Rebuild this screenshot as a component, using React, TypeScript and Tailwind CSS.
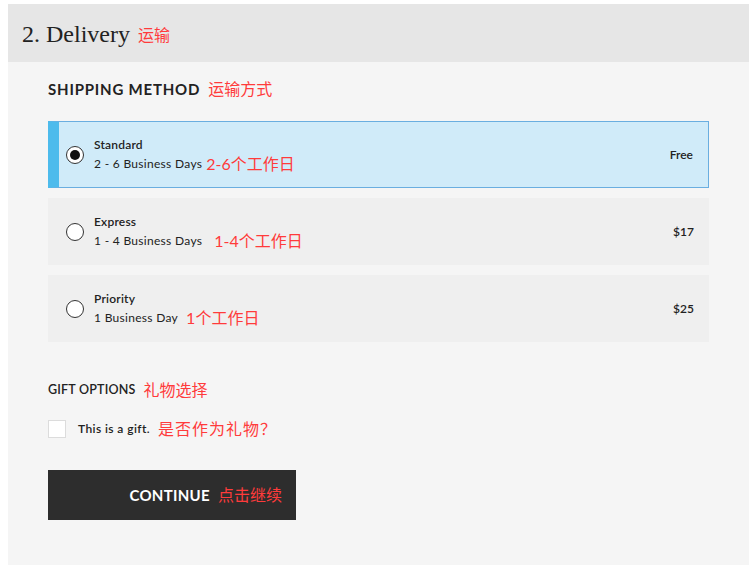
const red = 'text-[#ff3b3b]';

const options = [
  { name: 'Standard', days: '2 - 6 Business Days', cn: '2-6个工作日', price: 'Free', gap: 'ml-1', selected: true },
  { name: 'Express', days: '1 - 4 Business Days', cn: '1-4个工作日', price: '$17', gap: 'ml-3', selected: false },
  { name: 'Priority', days: '1 Business Day', cn: '1个工作日', price: '$25', gap: 'ml-2', selected: false },
];

function Radio({ checked }: { checked: boolean }) {
  return (
    <div className="w-[18px] h-[18px] rounded-full border border-[#333] bg-white flex items-center justify-center">
      {checked && <div className="w-[10px] h-[10px] rounded-full bg-[#111]" />}
    </div>
  );
}

export default function App() {
  return (
    <div className="w-[756px] h-[567px] bg-white pt-1 pl-2 pr-[7px] font-['Lato','Noto_Sans_CJK_SC',sans-serif] text-[#222]">
      <div className="bg-[#f5f5f5] h-[561px]">
        <div className="bg-[#e6e6e6] h-[58px] flex items-center pl-[14px] pt-[2px]">
          <span className="font-['Liberation_Serif','Noto_Sans_CJK_SC',serif] text-[24px] text-[#222]">2. Delivery</span>
          <span className={`ml-2 text-[16px] mt-[2px] ${red}`}>运输</span>
        </div>

        <div className="px-10 pt-4">
          <div className="flex items-center h-[22px]">
            <span className="font-bold text-[15px] tracking-[0.8px]">SHIPPING METHOD</span>
            <span className={`ml-2 text-[16px] ${red}`}>运输方式</span>
          </div>

          <div className="mt-[21px] flex flex-col gap-[10px] w-[661px]">
            {options.map((o) =>
              <div
                key={o.name}
                className={`h-[67px] flex items-center pr-[15px] ${o.selected ? 'bg-[#d0ebf9] border border-[#6aaee0] border-l-[11px] border-l-[#4dbbec] pl-[7px]' : 'bg-[#efefef] pl-[18px]'}`}
              >
                <Radio checked={o.selected} />
                <div className="ml-[10px] flex flex-col">
                  <span className="text-[12px] font-semibold leading-[18px] tracking-[0.2px]">{o.name}</span>
                  <div className="flex items-center leading-[20px]">
                    <span className="text-[12px] tracking-[0.3px]">{o.days}</span>
                    <span className={`${o.gap} text-[16px] ${red}`}>{o.cn}</span>
                  </div>
                </div>
                <span className="ml-auto text-[12px] font-semibold">{o.price}</span>
              </div>
            )}
          </div>

          <div className="mt-[38px] flex items-center h-[20px]">
            <span className="font-semibold text-[12.5px] tracking-[0.2px]">GIFT OPTIONS</span>
            <span className={`ml-2 text-[16px] ${red}`}>礼物选择</span>
          </div>

          <div className="mt-[19px] flex items-center h-[20px]">
            <div className="w-[18px] h-[18px] bg-white border border-[#dcdcdc]" />
            <span className="ml-3 text-[12px] font-semibold tracking-[0.4px]">This is a gift.</span>
            <span className={`ml-2 text-[16px] tracking-[1px] ${red}`}>是否作为礼物？</span>
          </div>

          <button className="mt-[31px] w-[248px] h-[50px] bg-[#2d2d2d] flex items-center justify-end pr-[14px]">
            <span className="text-white font-bold text-[15px] tracking-[0.3px]">CONTINUE</span>
            <span className={`ml-2 text-[16px] ${red}`}>点击继续</span>
          </button>
        </div>
      </div>
    </div>
  );
}
